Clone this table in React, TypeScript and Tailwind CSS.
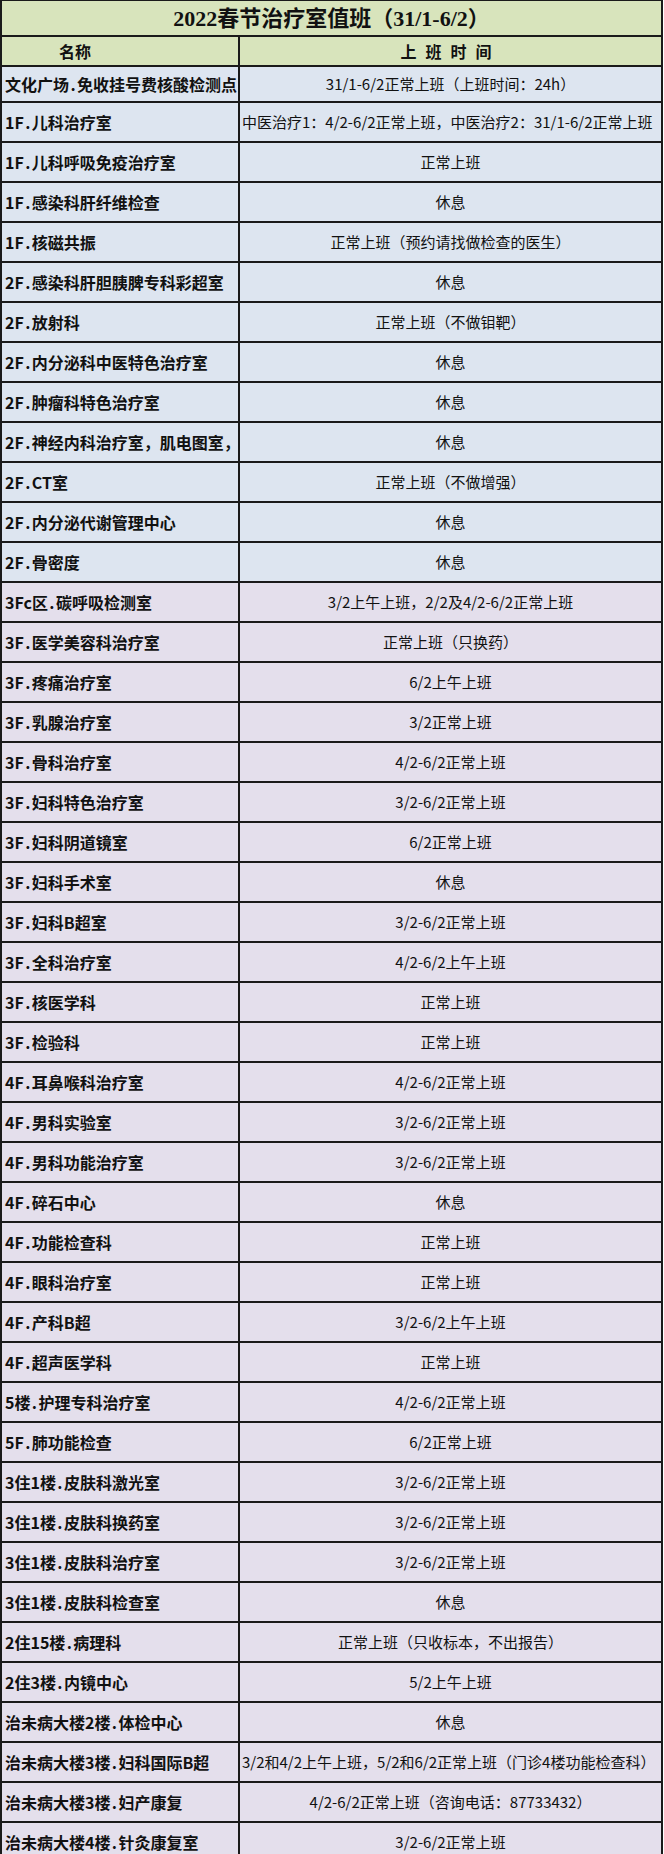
import React from 'react';

type Row = {
    name: string;
    time: string;
    wide?: boolean;
};

const rows: Row[] = [
    { name: '文化广场.免收挂号费核酸检测点', time: '31/1-6/2正常上班（上班时间：24h）' },
    { name: '1F.儿科治疗室', time: '中医治疗1：4/2-6/2正常上班，中医治疗2：31/1-6/2正常上班', wide: true },
    { name: '1F.儿科呼吸免疫治疗室', time: '正常上班' },
    { name: '1F.感染科肝纤维检查', time: '休息' },
    { name: '1F.核磁共振', time: '正常上班（预约请找做检查的医生）' },
    { name: '2F.感染科肝胆胰脾专科彩超室', time: '休息' },
    { name: '2F.放射科', time: '正常上班（不做钼靶）' },
    { name: '2F.内分泌科中医特色治疗室', time: '休息' },
    { name: '2F.肿瘤科特色治疗室', time: '休息' },
    { name: '2F.神经内科治疗室，肌电图室，', time: '休息' },
    { name: '2F.CT室', time: '正常上班（不做增强）' },
    { name: '2F.内分泌代谢管理中心', time: '休息' },
    { name: '2F.骨密度', time: '休息' },
    { name: '3Fc区.碳呼吸检测室', time: '3/2上午上班，2/2及4/2-6/2正常上班' },
    { name: '3F.医学美容科治疗室', time: '正常上班（只换药）' },
    { name: '3F.疼痛治疗室', time: '6/2上午上班' },
    { name: '3F.乳腺治疗室', time: '3/2正常上班' },
    { name: '3F.骨科治疗室', time: '4/2-6/2正常上班' },
    { name: '3F.妇科特色治疗室', time: '3/2-6/2正常上班' },
    { name: '3F.妇科阴道镜室', time: '6/2正常上班' },
    { name: '3F.妇科手术室', time: '休息' },
    { name: '3F.妇科B超室', time: '3/2-6/2正常上班' },
    { name: '3F.全科治疗室', time: '4/2-6/2上午上班' },
    { name: '3F.核医学科', time: '正常上班' },
    { name: '3F.检验科', time: '正常上班' },
    { name: '4F.耳鼻喉科治疗室', time: '4/2-6/2正常上班' },
    { name: '4F.男科实验室', time: '3/2-6/2正常上班' },
    { name: '4F.男科功能治疗室', time: '3/2-6/2正常上班' },
    { name: '4F.碎石中心', time: '休息' },
    { name: '4F.功能检查科', time: '正常上班' },
    { name: '4F.眼科治疗室', time: '正常上班' },
    { name: '4F.产科B超', time: '3/2-6/2上午上班' },
    { name: '4F.超声医学科', time: '正常上班' },
    { name: '5楼.护理专科治疗室', time: '4/2-6/2正常上班' },
    { name: '5F.肺功能检查', time: '6/2正常上班' },
    { name: '3住1楼.皮肤科激光室', time: '3/2-6/2正常上班' },
    { name: '3住1楼.皮肤科换药室', time: '3/2-6/2正常上班' },
    { name: '3住1楼.皮肤科治疗室', time: '3/2-6/2正常上班' },
    { name: '3住1楼.皮肤科检查室', time: '休息' },
    { name: '2住15楼.病理科', time: '正常上班（只收标本，不出报告）' },
    { name: '2住3楼.内镜中心', time: '5/2上午上班' },
    { name: '治未病大楼2楼.体检中心', time: '休息' },
    { name: '治未病大楼3楼.妇科国际B超', time: '3/2和4/2上午上班，5/2和6/2正常上班（门诊4楼功能检查科）', wide: true },
    { name: '治未病大楼3楼.妇产康复', time: '4/2-6/2正常上班（咨询电话：87733432）' },
    { name: '治未病大楼4楼.针灸康复室', time: '3/2-6/2正常上班' },
];

const font = { fontFamily: '"Noto Sans CJK SC", "Liberation Sans", sans-serif' };

// the dot in the sheet sits in a half-width slot
function Name({ text }: { text: string }) {
    const [head, ...rest] = text.split('.');
    return (
        <>
            {head}
            <span className="inline-block w-[8px] text-center">.</span>
            {rest.join('.')}
        </>
    );
}

export default function App() {
    return (
        <div className="h-[1854px] w-[664px] overflow-hidden bg-white text-[#111]" style={font}>
            <div className="w-[663px] border-l-2 border-r-2 border-t border-[#1a1a1a]">
                {/* Title */}
                <div className="flex h-[36px] items-center justify-center border-b-2 border-[#1a1a1a] bg-[#d8e4bc] text-[22px] font-bold">
                    <span style={{ fontFamily: '"Liberation Serif", "Noto Sans CJK SC", serif' }}>
                        2022春节治疗室值班（31/1-6/2）
                    </span>
                </div>

                {/* Header */}
                <div className="grid h-[30px] grid-cols-[238px_1fr] border-b-2 border-[#1a1a1a] bg-[#d8e4bc] text-[16px] font-bold">
                    <div className="flex items-center border-r-2 border-[#1a1a1a] pl-[57px]">名称</div>
                    <div className="flex items-center justify-center tracking-[9px]">上班时间</div>
                </div>

                {/* Rows */}
                {rows.map((row, i) => (
                    <div
                        key={row.name}
                        className={`grid grid-cols-[238px_1fr] border-b-2 border-[#1a1a1a] ${i === 0 ? 'h-[36px]' : 'h-[40px]'} ${i < 13 ? 'bg-[#dde5f0]' : 'bg-[#e4dfec]'}`}
                    >
                        <div className="flex items-center overflow-hidden whitespace-nowrap border-r-2 border-[#1a1a1a] pl-[3px] text-[16px] font-bold">
                            <span>
                                <Name text={row.name} />
                            </span>
                        </div>
                        <div
                            className={`flex items-center overflow-hidden whitespace-nowrap text-[15px] ${row.wide ? 'justify-start pl-[2px]' : 'justify-center'}`}
                        >
                            {row.time}
                        </div>
                    </div>
                ))}
            </div>
        </div>
    );
}
